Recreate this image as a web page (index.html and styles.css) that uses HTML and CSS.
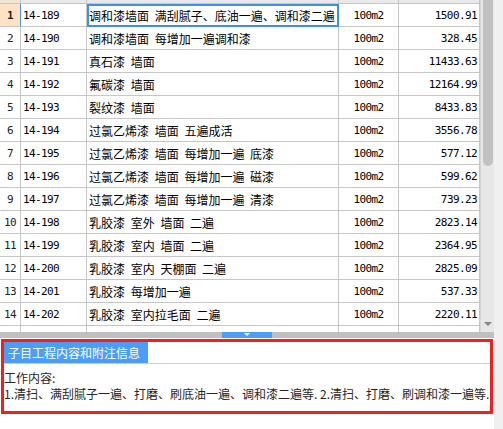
FILE: index.html
```html
<!DOCTYPE html>
<html lang="zh-CN">
<head>
<meta charset="utf-8">
<title>定额子目</title>
<link rel="stylesheet" href="styles.css">
</head>
<body>
<div class="app">
  <div class="main">
    <div class="grid">
      <div class="table">
        <div class="row head"><div class="cell c0"></div><div class="cell c1"></div><div class="cell c2"></div><div class="cell c3"></div><div class="cell c4"></div></div>
        <div class="row sel"><div class="cell c0">1</div><div class="cell c1">14-189</div><div class="cell c2 active">调和漆墙面 满刮腻子、底油一遍、调和漆二遍</div><div class="cell c3">100m2</div><div class="cell c4">1500.91</div></div>
        <div class="row"><div class="cell c0">2</div><div class="cell c1">14-190</div><div class="cell c2">调和漆墙面 每增加一遍调和漆</div><div class="cell c3">100m2</div><div class="cell c4">328.45</div></div>
        <div class="row"><div class="cell c0">3</div><div class="cell c1">14-191</div><div class="cell c2">真石漆 墙面</div><div class="cell c3">100m2</div><div class="cell c4">11433.63</div></div>
        <div class="row"><div class="cell c0">4</div><div class="cell c1">14-192</div><div class="cell c2">氟碳漆 墙面</div><div class="cell c3">100m2</div><div class="cell c4">12164.99</div></div>
        <div class="row"><div class="cell c0">5</div><div class="cell c1">14-193</div><div class="cell c2">裂纹漆 墙面</div><div class="cell c3">100m2</div><div class="cell c4">8433.83</div></div>
        <div class="row"><div class="cell c0">6</div><div class="cell c1">14-194</div><div class="cell c2">过氯乙烯漆 墙面 五遍成活</div><div class="cell c3">100m2</div><div class="cell c4">3556.78</div></div>
        <div class="row"><div class="cell c0">7</div><div class="cell c1">14-195</div><div class="cell c2">过氯乙烯漆 墙面 每增加一遍 底漆</div><div class="cell c3">100m2</div><div class="cell c4">577.12</div></div>
        <div class="row"><div class="cell c0">8</div><div class="cell c1">14-196</div><div class="cell c2">过氯乙烯漆 墙面 每增加一遍 磁漆</div><div class="cell c3">100m2</div><div class="cell c4">599.62</div></div>
        <div class="row"><div class="cell c0">9</div><div class="cell c1">14-197</div><div class="cell c2">过氯乙烯漆 墙面 每增加一遍 清漆</div><div class="cell c3">100m2</div><div class="cell c4">739.23</div></div>
        <div class="row"><div class="cell c0">10</div><div class="cell c1">14-198</div><div class="cell c2">乳胶漆 室外 墙面 二遍</div><div class="cell c3">100m2</div><div class="cell c4">2823.14</div></div>
        <div class="row"><div class="cell c0">11</div><div class="cell c1">14-199</div><div class="cell c2">乳胶漆 室内 墙面 二遍</div><div class="cell c3">100m2</div><div class="cell c4">2364.95</div></div>
        <div class="row"><div class="cell c0">12</div><div class="cell c1">14-200</div><div class="cell c2">乳胶漆 室内 天棚面 二遍</div><div class="cell c3">100m2</div><div class="cell c4">2825.09</div></div>
        <div class="row"><div class="cell c0">13</div><div class="cell c1">14-201</div><div class="cell c2">乳胶漆 每增加一遍</div><div class="cell c3">100m2</div><div class="cell c4">537.33</div></div>
        <div class="row"><div class="cell c0">14</div><div class="cell c1">14-202</div><div class="cell c2">乳胶漆 室内拉毛面 二遍</div><div class="cell c3">100m2</div><div class="cell c4">2220.11</div></div>
        <div class="row"><div class="cell c0"></div><div class="cell c1"></div><div class="cell c2"></div><div class="cell c3"></div><div class="cell c4"></div></div>
      </div>
      <div class="vscroll">
        <div class="thumb"></div>
        <div class="arrow"></div>
      </div>
    </div>
    <div class="splitter"><div class="handle"></div></div>
    <div class="panel">
      <div class="tabs"><div class="tab">子目工程内容和附注信息</div></div>
      <div class="content">
        <div class="line">工作内容:</div>
        <div class="line">1.清扫、满刮腻子一遍、打磨、刷底油一遍、调和漆二遍等. 2.清扫、打磨、刷调和漆一遍等.</div>
      </div>
    </div>
  </div>
  <div class="side"></div>
</div>
</body>
</html>
```

FILE: styles.css
```css
* { box-sizing: border-box; }
html, body { margin: 0; padding: 0; }
body {
  width: 503px;
  height: 429px;
  overflow: hidden;
  background: #ffffff;
  font-family: "Noto Sans CJK SC", "Noto Sans", sans-serif;
  color: #000;
}
.app {
  display: flex;
  height: 429px;
}
.main {
  width: 494px;
  display: flex;
  flex-direction: column;
  background: #fff;
}
.side {
  flex: 1;
  background: #f0f0f0;
}
.grid {
  height: 332px;
  display: flex;
  overflow: hidden;
}
.table {
  width: 480px;
  overflow: hidden;
}
.row {
  display: grid;
  grid-template-columns: 21px 66px 252px 60px 81px;
  height: 23px;
}
.cell {
  border-right: 1px solid #c6c6c6;
  border-bottom: 1px solid #c6c6c6;
  display: flex;
  align-items: center;
  white-space: nowrap;
  overflow: visible;
  font-size: 12px;
}
.row.head { height: 4px; }
.row.head .cell { background: #e9e9e9; }
.row.head .c0 { background: #efe4d6; }
.c0 {
  justify-content: center;
  font-family: "DejaVu Sans Mono", monospace;
  font-size: 11px;
  letter-spacing: -0.6px;
  color: #222;
}
.c1 {
  padding-left: 2px;
  font-family: "DejaVu Sans Mono", monospace;
  font-size: 11px;
  letter-spacing: -0.6px;
}
.c2 {
  padding-left: 2px;
  font-family: "Noto Sans CJK SC", sans-serif;
  font-size: 12px;
  word-spacing: 3px;
}
.c3 {
  justify-content: center;
  font-family: "DejaVu Sans Mono", monospace;
  font-size: 11px;
  letter-spacing: -0.6px;
}
.c4 {
  justify-content: flex-end;
  padding-right: 2px;
  font-family: "DejaVu Sans Mono", monospace;
  font-size: 11px;
  letter-spacing: -0.6px;
}
.row.sel .c0 {
  background: #fde3c3;
  font-weight: bold;
  border-right-color: #4a93e8;
}
.active {
  outline: 2px solid #3f8ee9;
  outline-offset: -2px;
}
.vscroll {
  width: 14px;
  background: #e7e7e7;
  border-left: 1px solid #d6d6d6;
  display: flex;
  flex-direction: column;
  align-items: center;
}
.thumb {
  width: 10px;
  height: 166px;
  margin-left: 1px;
  background: #c1c1c1;
  border-radius: 0 0 5px 5px;
}
.arrow {
  margin-top: auto;
  margin-bottom: 6px;
  width: 0;
  height: 0;
  border-top: 4px solid #858585;
  border-left: 4px solid transparent;
  border-right: 4px solid transparent;
}
.splitter {
  height: 6px;
  background: #c0c0c0;
  display: flex;
  justify-content: flex-start;
}
.handle {
  margin-left: 222px;
  width: 50px;
  height: 6px;
  background: #4b9df5;
  display: flex;
  justify-content: center;
  padding-top: 1px;
}
.handle::before {
  content: "";
  width: 0;
  height: 0;
  border-top: 3px solid #ffffff;
  border-left: 3px solid transparent;
  border-right: 3px solid transparent;
}
.panel {
  margin-top: 1px;
  margin-left: 1px;
  width: 492px;
  height: 75px;
  border: 3px solid #f41f1a;
  background: #fff;
  overflow: hidden;
}
.tabs {
  height: 22px;
  border-bottom: 1px solid #cfcfcf;
  display: flex;
}
.tab {
  width: 144px;
  height: 21px;
  background: #4b9df5;
  color: #ffffff;
  font-size: 12px;
  line-height: 21px;
  padding-left: 4px;
  white-space: nowrap;
}
.content {
  padding-top: 6px;
  font-size: 12px;
  line-height: 16px;
  color: #262626;
}
.line {
  white-space: nowrap;
  overflow: hidden;
}
```
